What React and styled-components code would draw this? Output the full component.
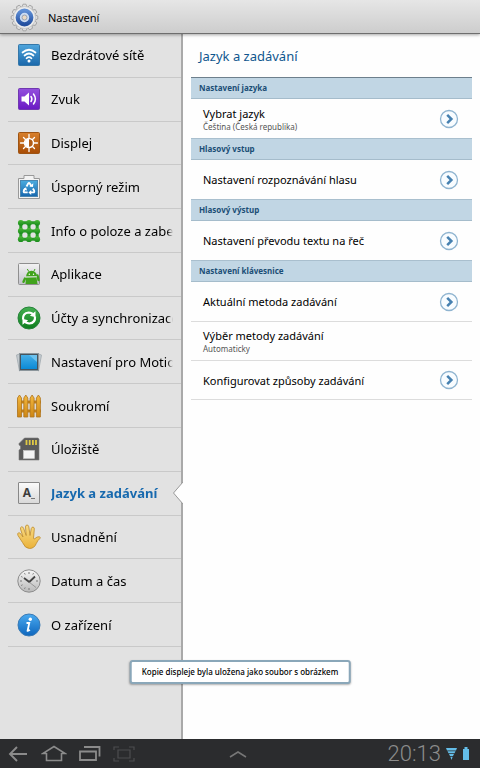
import React, { useState } from 'react';
import styled, { createGlobalStyle, css } from 'styled-components';

const GlobalStyle = createGlobalStyle`
  * {
    box-sizing: border-box;
  }

  body {
    margin: 0;
    background: #fefefe;
    color: #000;
    font-family: 'Noto Sans', 'Open Sans', sans-serif;
  }

  button {
    border: 0;
    padding: 0;
    background: none;
    color: inherit;
    font: inherit;
    text-align: left;
    cursor: pointer;
  }
`;

const Page = styled.div`
  position: relative;
  display: flex;
  flex-direction: column;
  min-height: 100vh;
`;

const TopBar = styled.header`
  display: flex;
  align-items: center;
  gap: 9px;
  height: 34px;
  padding: 1px 0 0 10px;
  background: linear-gradient(#e6e6e6, #cdcdcd);
  border-bottom: 1px solid #6e6e6e;
  box-shadow: 0 1px 3px rgba(0, 0, 0, 0.35);
  z-index: 1;
`;

const AppName = styled.h1`
  margin: 0;
  font-size: 11px;
  font-weight: 400;
`;

const Columns = styled.div`
  flex: 1;
  display: grid;
  grid-template-columns: 183px 1fr;
`;

const Sidebar = styled.nav`
  padding-left: 8px;
  background: #e2e2e2;
  border-right: 2px solid #a9a9a9;
`;

const Menu = styled.ul`
  display: grid;
  grid-auto-rows: 1fr;
  min-height: 613px;
  margin: 0;
  padding: 0;
  list-style: none;
`;

const MenuItem = styled.li`
  position: relative;
  display: flex;
  min-width: 0;
  border-bottom: 1px solid #c9c9c9;
`;

const MenuButton = styled.button`
  flex: 1;
  display: flex;
  align-items: center;
  gap: 9px;
  min-width: 0;
  padding: 0 8px;

  svg {
    flex: none;
  }
`;

const MenuLabel = styled.span`
  flex: 1;
  overflow: hidden;
  white-space: nowrap;
  font-size: 13px;
  line-height: 20px;
  font-weight: 400;
  mask-image: linear-gradient(to left, transparent, #000 6px);

  ${(props) =>
    props.$active &&
    css`
      color: #1769ae;
      font-weight: 700;
    `}
`;

const Pointer = styled.svg`
  position: absolute;
  right: -2px;
  top: 50%;
  transform: translateY(-50%);
`;

const Detail = styled.main`
  padding: 0 8px;
  background: #fefefe;
`;

const DetailTitle = styled.h2`
  margin: 0;
  padding: 12px 8px 11px;
  color: #0f568e;
  font-size: 13px;
  line-height: 20px;
  font-weight: 400;
`;

const SectionTitle = styled.h3`
  margin: 0;
  padding: 0 8px;
  height: 22px;
  background: #c1d6e4;
  border-top: 1px solid ${(props) => (props.$first ? '#6d7f8c' : '#a9bfce')};
  border-bottom: 1px solid #a5bccb;
  color: #1b4e76;
  font-size: 8px;
  line-height: 20px;
  font-weight: 700;
`;

const Option = styled.button`
  display: flex;
  align-items: center;
  justify-content: space-between;
  width: 100%;
  height: 39px;
  padding: 0 13px 0 12px;

  & + & {
    border-top: 1px solid #dcdcdc;
  }

  section:last-child > &:last-child {
    height: 40px;
    border-bottom: 1px solid #dcdcdc;
  }
`;

const OptionText = styled.span`
  display: flex;
  flex-direction: column;
  font-size: 11px;
  line-height: 15px;
`;

const OptionNote = styled.small`
  color: #555;
  font-size: 8px;
  line-height: 11px;
`;

const Toast = styled.div`
  position: absolute;
  left: 50%;
  bottom: 84px;
  transform: translateX(-50%);
  padding: 0 10px;
  background: #fff;
  border: 2px solid #8aa7b9;
  border-radius: 3px;
  box-shadow: 0 1px 2px rgba(0, 0, 0, 0.3);
  font-size: 8px;
  line-height: 20px;
  font-weight: 500;
  white-space: nowrap;
`;

const SystemBar = styled.footer`
  display: grid;
  grid-template-columns: 1fr auto 1fr;
  align-items: center;
  height: 29px;
  padding: 0 10px 0 6px;
  background: #2b2c2e;
`;

const SystemKeys = styled.div`
  display: flex;
  align-items: center;
  gap: 11px;
`;

const SystemKey = styled.button`
  display: flex;
`;

const Status = styled.div`
  display: flex;
  align-items: center;
  justify-content: flex-end;
  gap: 5px;
`;

const Clock = styled.time`
  color: #8c8c8c;
  font-family: Roboto, sans-serif;
  font-size: 22px;
  line-height: 28px;
  font-weight: 300;
`;

const Icon = ({ children }) => (
  <svg width="26" height="26" viewBox="0 0 26 26" fill="none" aria-hidden="true">
    {children}
  </svg>
);

const Gradient = ({ id, from, to }) => (
  <linearGradient id={id} x1="0" y1="0" x2="0" y2="1">
    <stop offset="0" stopColor={from} />
    <stop offset="1" stopColor={to} />
  </linearGradient>
);

const WifiIcon = () => (
  <Icon>
    <Gradient id="wifi" from="#4fa5dc" to="#1b68ab" />
    <rect x="2.5" y="2.5" width="21" height="21" rx="1" fill="url(#wifi)" stroke="#3577a8" />
    <path d="M6.5 10.5q6.5-5.5 13 0M8.5 13.5q4.5-4 9 0M10.5 16.3q2.5-2.2 5 0" stroke="#fff" strokeWidth="1.7" strokeLinecap="round" />
    <circle cx="13" cy="19" r="1.5" fill="#fff" />
  </Icon>
);

const SoundIcon = () => (
  <Icon>
    <Gradient id="sound" from="#9350dd" to="#6a19c4" />
    <rect x="2.5" y="2.5" width="21" height="21" rx="1" fill="url(#sound)" stroke="#7038b0" />
    <path d="M5.5 10.5h3l4.5-4v13l-4.5-4h-3z" fill="#fff" />
    <path d="M15 10.5q1.8 2.5 0 5M17.5 8q3.8 5 0 10" stroke="#fff" strokeWidth="1.5" strokeLinecap="round" />
  </Icon>
);

const DisplayIcon = () => (
  <Icon>
    <Gradient id="display" from="#d8802c" to="#a84c05" />
    <rect x="2.5" y="2.5" width="21" height="21" rx="1" fill="url(#display)" stroke="#9d5414" />
    <path
      d="M13 4.5v4M13 17.5v4M4.5 13h4M17.5 13h4M7.5 7.5l2 2M16.5 16.5l2 2M18.5 7.5l-2 2M9.5 16.5l-2 2"
      stroke="#fff"
      strokeWidth="1.3"
      strokeLinecap="round"
    />
    <circle cx="13" cy="13" r="4.5" fill="#b05d18" stroke="#fff" strokeWidth="1.5" />
    <path d="M13 8.7a4.3 4.3 0 0 0 0 8.6z" fill="#fff" />
  </Icon>
);

const BatteryIcon = () => (
  <Icon>
    <Gradient id="power" from="#4bacdf" to="#1767ae" />
    <path d="M2.5 4.5h5.5v-3h10v3h5.5v20h-21z" fill="#f3f3f3" stroke="#999" />
    <rect x="4.5" y="6.5" width="17" height="16" fill="url(#power)" stroke="#4a86b0" />
    <path
      d="M10.5 12.5l1.7-3q.8-1.2 1.6 0l1.7 3M16.9 14.5l1.3 2.2q.5 1.6-1 1.7h-2.7M11.7 18.4H8.8q-1.6-.1-1-1.7l1.3-2.2"
      stroke="#fff"
      strokeWidth="1.8"
    />
    <path d="M13.4 12.3l3.6.6.3-3.6zM15.2 15.9v5l-2.8-2.5zM7 15.5l3-2.2 1.1 3.3z" fill="#fff" />
  </Icon>
);

const GRID_POINTS = [4.8, 13, 21.2];

const LocationIcon = () => (
  <Icon>
    <Gradient id="dots" from="#4cb838" to="#178a1b" />
    <path d="M4.8 4.8h16.4v16.4H4.8zM13 4.8v16.4M4.8 13h16.4" stroke="#2b9a29" strokeWidth="3" />
    {GRID_POINTS.map((y) => GRID_POINTS.map((x) => <circle key={`${x}-${y}`} cx={x} cy={y} r="2.9" fill="url(#dots)" />))}
  </Icon>
);

const AppsIcon = () => (
  <Icon>
    <Gradient id="apps" from="#f3f3f3" to="#c2c2ca" />
    <rect x="2.5" y="2.5" width="21" height="21" rx="1" fill="url(#apps)" stroke="#8f8f8f" />
    <g fill="#41a31c">
      <path d="M10 15.5q.6-5.5 5.5-5.8 5.3.5 5.500 5.500z" />
      <path d="M10 16.5l10.5-.3 1 6.8H9.5z" />
      <path d="M9 17.5l-1.5 3.3M21.5 14.5l1 4.5" stroke="#41a31c" strokeWidth="2.4" strokeLinecap="round" />
      <path d="M11.3 8l1.6 2.7M19 8l-1.3 2.7" stroke="#41a31c" />
    </g>
    <path d="M9.5 16l11.5-.3" stroke="#cfe6c6" strokeWidth=".8" />
    <circle cx="13.3" cy="13.2" r=".7" fill="#fff" />
    <circle cx="17.5" cy="13.2" r=".7" fill="#fff" />
  </Icon>
);

const SyncIcon = () => (
  <Icon>
    <Gradient id="sync" from="#46b052" to="#0c7d1c" />
    <circle cx="13" cy="13" r="11" fill="url(#sync)" stroke="#25833a" />
    <path d="M7 14.5q-.6-6.3 5.7-7 3.2 0 4.7 2.3M19 11.5q.6 6.3-5.7 7-3.2 0-4.7-2.3" stroke="#fff" strokeWidth="2.2" />
    <path d="M19.5 6.2v6l-5.6-1.4zM6.5 19.8v-6l5.6 1.4z" fill="#fff" />
  </Icon>
);

const MotionIcon = () => (
  <Icon>
    <Gradient id="motion" from="#45aee6" to="#0b8ad6" />
    <path d="M.5 6l3-1 2 16-2 1zM25.5 6l-3-1-2 16 2 1z" fill="#c3cacf" stroke="#aab2b7" />
    <rect x="3.5" y="4.5" width="19" height="17" fill="#47545d" stroke="#8c969c" />
    <rect x="5" y="6" width="16" height="14" fill="url(#motion)" />
    <path d="M13 6h8v7z" fill="#6cc2ef" />
  </Icon>
);

const FENCE_POSTS = [1.5, 7.8, 14.1, 20.4];

const FenceIcon = () => (
  <Icon>
    <Gradient id="fence" from="#f4b93f" to="#cd8614" />
    <path d="M1.5 9H25M1.5 18H25" stroke="#c08019" strokeWidth="3" />
    {FENCE_POSTS.map((x) => (
      <path key={x} d={`M${x} 24V5l2-3 2 3v19z`} fill="url(#fence)" stroke="#ad7420" strokeWidth=".8" />
    ))}
  </Icon>
);

const StorageIcon = () => (
  <Icon>
    <path d="M8.5 2H22l1 1v21H3V14l1.5-1V10L3 9V7.5z" fill="#5b5b5b" stroke="#7d7d7d" strokeWidth=".6" />
    <path d="M10.5 4v5M13.7 4v5M16.9 4v5M20 4v5" stroke="#e0ca45" strokeWidth="1.8" />
    <rect x="7.5" y="14.5" width="11" height="8" fill="#f3f3f3" stroke="#ccc" strokeWidth=".6" />
  </Icon>
);

const LetterBox = styled.span`
  flex: none;
  display: flex;
  align-items: center;
  justify-content: center;
  width: 22px;
  height: 22px;
  margin: 0 2px;
  border: 1px solid #888;
  border-radius: 1px;
  background: linear-gradient(#fafafa, #d9d9d9);
  color: #3d3d3d;
  font-size: 12px;
  line-height: 20px;
  font-weight: 700;

  &::after {
    content: '';
    align-self: flex-end;
    width: 4px;
    height: 1px;
    margin-bottom: 4px;
    background: #777;
  }
`;

const LanguageIcon = () => <LetterBox aria-hidden="true">A</LetterBox>;

const HandIcon = () => (
  <Icon>
    <Gradient id="hand" from="#f9dc86" to="#eab23a" />
    <path
      d="M6.5 18.5L2 11.5q-1-2 .5-2.7 1.300-.4 2.300 1.200l2.200 3L4.500 5q-.3-1.800 1.100-2.200 1.400-.1 2 1.500l2.600 7.200L9.500 3q0-1.900 1.500-2 1.500 0 1.800 1.800l1.200 8.700 1.300-7q.5-1.600 1.800-1.400 1.400.3 1.200 2l-.8 9.200q.3 1.400 1.500.2 2-2 4.300-1.800 1.700.6.600 1.800-2.400 2-3.600 5-2 5-6.800 5-4.500 0-7-6z"
      fill="url(#hand)"
      stroke="#bd8a2c"
      strokeWidth=".8"
    />
  </Icon>
);

const ClockIcon = () => (
  <Icon>
    <Gradient id="clock" from="#f6f6f6" to="#b9b9b9" />
    <circle cx="13" cy="13" r="11.2" fill="url(#clock)" stroke="#8d8d8d" />
    <path d="M13 4v2M13 20v2M4 13h2M20 13h2M8.5 5.2l.7 1.3M17.5 5.2l-.7 1.3M5.2 8.5l1.3.7M5.2 17.5l1.3-.7M8.5 20.8l.7-1.3" stroke="#777" />
    <path d="M8 10l5.3 4L19 8.5" stroke="#444" strokeWidth="1.8" />
    <path d="M13 14l7 5.5" stroke="#888" strokeWidth=".8" />
  </Icon>
);

const InfoIcon = () => (
  <Icon>
    <Gradient id="info" from="#4aaaf0" to="#0e66bd" />
    <circle cx="13" cy="13" r="11" fill="url(#info)" stroke="#3a7ab5" />
    <circle cx="14.3" cy="7.2" r="1.7" fill="#fff" />
    <path d="M10.500 11h2.800l-1.700 7.800q.8.300 2.300-.9" stroke="#fff" strokeWidth="1.8" />
  </Icon>
);

const TEETH = Array.from({ length: 12 }, (_, i) => i * 30);

const GearIcon = () => (
  <svg width="29" height="29" viewBox="0 0 29 29" aria-hidden="true">
    <Gradient id="gear" from="#5f8fd6" to="#2450a0" />
    {TEETH.map((angle) => (
      <path
        key={angle}
        d="M11.8 4.5L13 1.200h3l1.200 3.300z"
        fill="#dedede"
        stroke="#9c9c9c"
        strokeWidth=".8"
        transform={`rotate(${angle} 14.5 14.5)`}
      />
    ))}
    <circle cx="14.5" cy="14.5" r="11" fill="#ececec" stroke="#bbb" strokeWidth=".6" />
    <circle cx="14.5" cy="14.5" r="6.8" fill="#cddcf2" stroke="url(#gear)" strokeWidth="4.2" />
    <circle cx="14.5" cy="14.5" r="2.5" fill="#ead9c4" stroke="#8894a8" strokeWidth=".8" />
  </svg>
);

const ArrowIcon = () => (
  <svg width="20" height="20" viewBox="0 0 20 20" fill="none" aria-hidden="true">
    <circle cx="10" cy="10" r="8.5" fill="#f8fcff" stroke="#8fb4d0" strokeWidth="1.3" />
    <path d="M8.2 5.800L12.400 10l-4.200 4.200" stroke="#4680b0" strokeWidth="2.5" />
  </svg>
);

const MENU = [
  { label: 'Bezdrátové sítě', icon: WifiIcon },
  { label: 'Zvuk', icon: SoundIcon },
  { label: 'Displej', icon: DisplayIcon },
  { label: 'Úsporný režim', icon: BatteryIcon },
  { label: 'Info o poloze a zabezpečení', icon: LocationIcon },
  { label: 'Aplikace', icon: AppsIcon },
  { label: 'Účty a synchronizace', icon: SyncIcon },
  { label: 'Nastavení pro Motion', icon: MotionIcon },
  { label: 'Soukromí', icon: FenceIcon },
  { label: 'Úložiště', icon: StorageIcon },
  { label: 'Jazyk a zadávání', icon: LanguageIcon },
  { label: 'Usnadnění', icon: HandIcon },
  { label: 'Datum a čas', icon: ClockIcon },
  { label: 'O zařízení', icon: InfoIcon },
];

const SECTIONS = [
  { title: 'Nastavení jazyka', options: [{ label: 'Vybrat jazyk', note: 'Čeština (Česká republika)', arrow: true }] },
  { title: 'Hlasový vstup', options: [{ label: 'Nastavení rozpoznávání hlasu', arrow: true }] },
  { title: 'Hlasový výstup', options: [{ label: 'Nastavení převodu textu na řeč', arrow: true }] },
  {
    title: 'Nastavení klávesnice',
    options: [
      { label: 'Aktuální metoda zadávání', arrow: true },
      { label: 'Výběr metody zadávání', note: 'Automaticky' },
      { label: 'Konfigurovat způsoby zadávání', arrow: true },
    ],
  },
];

function App() {
  const [active, setActive] = useState('Jazyk a zadávání');

  return (
    <>
      <GlobalStyle />
      <Page>
        <TopBar>
          <GearIcon />
          <AppName>Nastavení</AppName>
        </TopBar>

        <Columns>
          <Sidebar>
            <Menu>
              {MENU.map(({ label, icon: ItemIcon }) => (
                <MenuItem key={label}>
                  <MenuButton type="button" onClick={() => setActive(label)}>
                    <ItemIcon />
                    <MenuLabel $active={label === active}>{label}</MenuLabel>
                  </MenuButton>
                  {label === active && (
                    <Pointer width="11" height="22" viewBox="0 0 11 22" aria-hidden="true">
                      <path d="M11 0L1.5 11 11 22" fill="#fefefe" stroke="#999" />
                    </Pointer>
                  )}
                </MenuItem>
              ))}
            </Menu>
          </Sidebar>

          <Detail>
            <DetailTitle>Jazyk a zadávání</DetailTitle>
            {SECTIONS.map((section, index) => (
              <section key={section.title}>
                <SectionTitle $first={index === 0}>{section.title}</SectionTitle>
                {section.options.map((option) => (
                  <Option type="button" key={option.label}>
                    <OptionText>
                      {option.label}
                      {option.note && <OptionNote>{option.note}</OptionNote>}
                    </OptionText>
                    {option.arrow && <ArrowIcon />}
                  </Option>
                ))}
              </section>
            ))}
          </Detail>
        </Columns>

        <SystemBar>
          <SystemKeys>
            <SystemKey type="button" aria-label="Zpět">
              <svg width="24" height="20" viewBox="0 0 24 20" fill="none" stroke="#8b8b8b" strokeWidth="1.9">
                <path d="M21 10H4M11 3l-7 7 7 7" />
              </svg>
            </SystemKey>
            <SystemKey type="button" aria-label="Domů">
              <svg width="26" height="20" viewBox="0 0 26 20" fill="none" stroke="#8b8b8b" strokeWidth="1.6">
                <path d="M5.5 9.5H1.8L13 2.5l11.200 7h-3.700M5.500 9v7.500h15V9" />
              </svg>
            </SystemKey>
            <SystemKey type="button" aria-label="Poslední aplikace">
              <svg width="24" height="20" viewBox="0 0 24 20" fill="none" stroke="#8b8b8b" strokeWidth="1.8">
                <path d="M2 7.5h16V16H2zM6 3h15.500v9.500" />
              </svg>
            </SystemKey>
            <SystemKey type="button" aria-label="Snímek obrazovky">
              <svg width="22" height="20" viewBox="0 0 22 20" fill="none" stroke="#4c4d4f" strokeWidth="1.2">
                <path d="M5 6h12v8H5zM1 6V3h5M16 3h5v3M21 14v3h-5M6 17H1v-3" />
              </svg>
            </SystemKey>
          </SystemKeys>
          <SystemKey type="button" aria-label="Otevřít panel">
            <svg width="18" height="10" viewBox="0 0 18 10" fill="none" stroke="#777" strokeWidth="1.5">
              <path d="M1 8l8-5 8 5" />
            </svg>
          </SystemKey>
          <Status>
            <Clock dateTime="20:13">20:13</Clock>
            <svg width="24" height="16" viewBox="0 0 24 16" fill="#64bde8" aria-hidden="true">
              <path d="M0 2h11l-1 2.500H1zM1.500 5.200h8l-1 2h-6zM3 8h5l-1 2H4zM4.300 10.800h2.400L5.500 14z" />
              <path d="M18.500 1h3v2h1.500v11h-6V3h1.500z" />
            </svg>
          </Status>
        </SystemBar>

        <Toast role="status">Kopie displeje byla uložena jako soubor s obrázkem</Toast>
      </Page>
    </>
  );
}

export default App;
